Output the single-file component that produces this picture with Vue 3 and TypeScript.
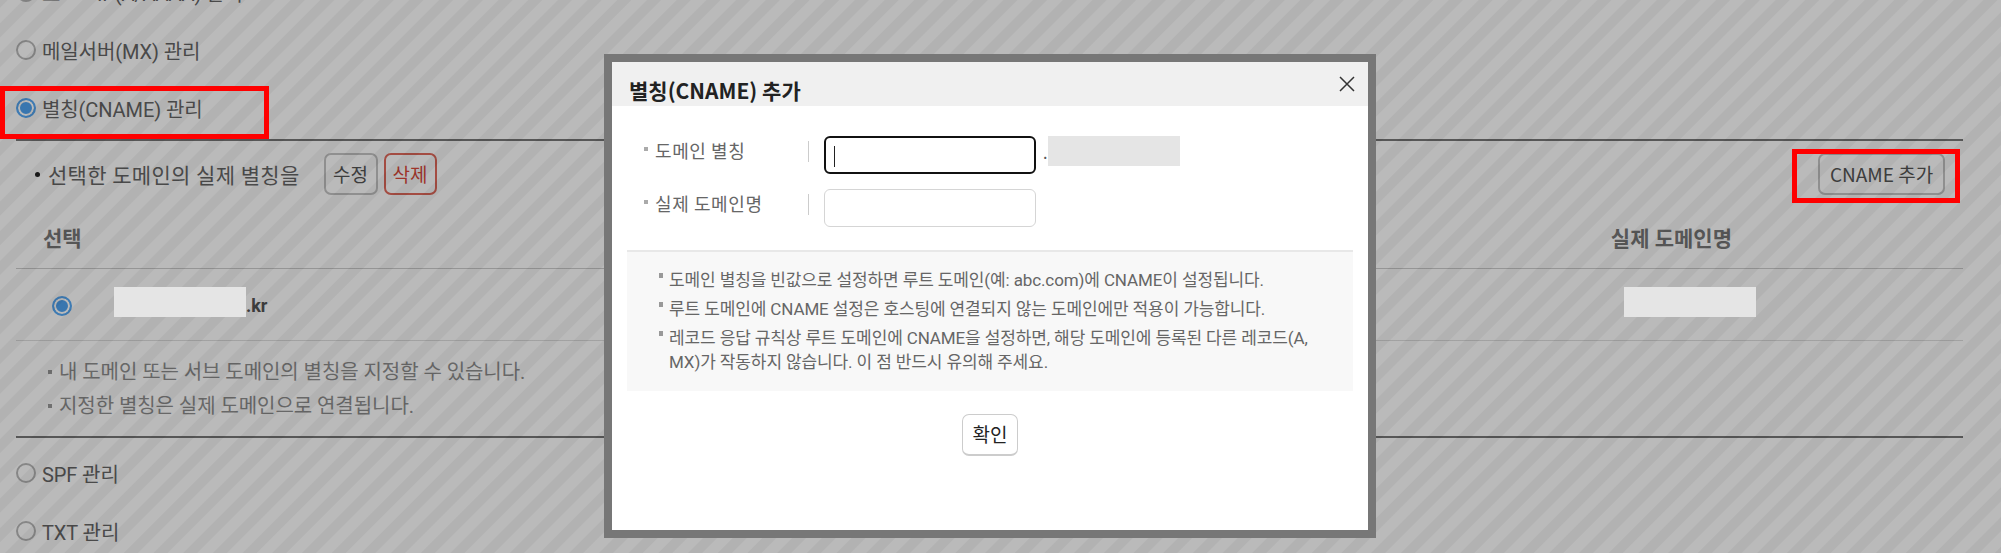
<script setup lang="ts">
const radioTop = ['호스트IP(A/AAAA) 관리', '메일서버(MX) 관리']
const radioBottom = ['SPF 관리', 'TXT 관리']
const pageNotes = [
  '내 도메인 또는 서브 도메인의 별칭을 지정할 수 있습니다.',
  '지정한 별칭은 실제 도메인으로 연결됩니다.',
]
const modalNotes = [
  '도메인 별칭을 빈값으로 설정하면 루트 도메인(예: abc.com)에 CNAME이 설정됩니다.',
  '루트 도메인에 CNAME 설정은 호스팅에 연결되지 않는 도메인에만 적용이 가능합니다.',
  '레코드 응답 규칙상 루트 도메인에 CNAME을 설정하면, 해당 도메인에 등록된 다른 레코드(A, MX)가 작동하지 않습니다. 이 점 반드시 유의해 주세요.',
]
</script>

<template>
  <div class="screen">
    <div class="page">
      <label v-for="r in radioTop" :key="r" class="radio-row">
        <span class="radio"></span>{{ r }}
      </label>
      <label class="radio-row">
        <span class="radio on"></span>별칭(CNAME) 관리
      </label>

      <section class="panel">
        <div class="toolbar">
          <span class="dot"></span>
          <span class="toolbar-text">선택한 도메인의 실제 별칭을</span>
          <button class="btn edit">수정</button>
          <button class="btn del">삭제</button>
          <button class="btn add">CNAME 추가</button>
        </div>
        <div class="thead">
          <span class="th-select">선택</span>
          <span class="th-real">실제 도메인명</span>
        </div>
        <div class="tbody">
          <span class="radio on row-radio"></span>
          <span class="mask row-mask"></span><b class="tld">.kr</b>
          <span class="mask row-mask real-mask"></span>
        </div>
        <ul class="notes">
          <li v-for="n in pageNotes" :key="n">{{ n }}</li>
        </ul>
      </section>

      <label v-for="r in radioBottom" :key="r" class="radio-row">
        <span class="radio"></span>{{ r }}
      </label>
    </div>

    <div class="overlay"></div>
    <div class="red-box box-a"></div>
    <div class="red-box box-b"></div>

    <div class="modal">
      <header class="modal-head">
        <h2>별칭(CNAME) 추가</h2>
        <svg class="close" width="16" height="16" viewBox="0 0 16 16">
          <path d="M1 1L15 15M15 1L1 15" stroke="#333" stroke-width="1.5" fill="none" />
        </svg>
      </header>
      <div class="form">
        <div class="form-row">
          <span class="form-label">도메인 별칭</span>
          <span class="input focus"><i class="caret"></i></span>
          <span class="suffix">.</span>
          <span class="mask"></span>
        </div>
        <div class="form-row second">
          <span class="form-label">실제 도메인명</span>
          <span class="input"></span>
        </div>
      </div>
      <ul class="info">
        <li v-for="n in modalNotes" :key="n">{{ n }}</li>
      </ul>
      <div class="actions">
        <button class="btn ok">확인</button>
      </div>
    </div>
  </div>
</template>

<style>
html, body {
  margin: 0;
  background: #fff;
  overflow: hidden;
}
</style>

<style scoped>
.screen {
  position: relative;
  width: 2001px;
  height: 553px;
  overflow: hidden;
  font-family: "Noto Sans CJK KR", "Noto Sans", sans-serif;
  color: #444;
}

.page {
  padding: 0 38px 0 16px;
  margin-top: -37px;
  font-family: Roboto, "Noto Sans CJK KR", sans-serif;
}

.radio-row {
  display: flex;
  align-items: center;
  height: 58px;
  font-size: 20px;
  letter-spacing: -0.1px;
  color: #666;
}

.radio {
  flex: none;
  box-sizing: border-box;
  width: 20px;
  height: 20px;
  margin-right: 6px;
  border: 2px solid #b8b8b8;
  border-radius: 50%;
  background: #fff;
}

.radio.on {
  border: 2px solid #55a8f5;
  box-shadow: inset 0 0 0 2px #fff;
  background: #4ea2f0;
}

.panel {
  border-top: 2px solid #777;
  border-bottom: 2px solid #777;
  margin-top: 2px;
  margin-bottom: 6px;
}

.toolbar {
  display: flex;
  align-items: center;
  height: 69px;
  padding: 0 18px 3px 19px;
  box-sizing: border-box;
  font-size: 21px;
  color: #666;
}

.dot {
  width: 5px;
  height: 5px;
  background: #222;
  border-radius: 50%;
  margin-right: 8px;
}

.toolbar-text {
  letter-spacing: 0.27px;
  margin-right: 24px;
}

.btn {
  box-sizing: border-box;
  height: 42px;
  padding: 0 0 2px;
  font: inherit;
  font-size: 19px;
  background: #fff;
  color: #555;
  border: 2px solid #c4c4c4;
  border-radius: 7px;
}

.edit {
  width: 54px;
  margin-right: 6px;
}

.del {
  width: 53px;
  color: #d9483a;
  border-color: #e0685a;
}

.add {
  width: 127px;
  margin-left: auto;
  font-family: "Noto Sans CJK KR", sans-serif;
  font-size: 19px;
}

.thead {
  box-sizing: border-box;
  display: flex;
  justify-content: space-between;
  align-items: center;
  height: 59px;
  padding: 0 231px 4px 27px;
  font-size: 21px;
  font-weight: 700;
  color: #777;
  border-bottom: 1px solid #ccc;
}

.tbody {
  display: flex;
  align-items: center;
  height: 71px;
  padding-left: 36px;
  border-bottom: 1px solid #ddd;
  font-size: 18px;
}

.row-radio {
  margin: 2px 42px 0 0;
}

.row-mask {
  margin-bottom: 5px;
}

.mask {
  position: relative;
  z-index: 3;
  flex: none;
  display: block;
  width: 132px;
  height: 30px;
  background: #e5e5e5;
}

.tld {
  color: #555;
  margin-top: 2px;
}

.real-mask {
  margin-left: auto;
  margin-right: 207px;
}

.notes {
  list-style: none;
  margin: 0;
  padding: 14px 0 13px 32px;
  font-size: 20px;
  line-height: 34px;
  letter-spacing: -0.06px;
  color: #8e8e8e;
}

.notes li {
  position: relative;
  padding-left: 11px;
}

.notes li::before {
  content: "";
  position: absolute;
  left: 0;
  top: 15px;
  width: 4px;
  height: 4px;
  background: #999;
}

.overlay {
  position: absolute;
  inset: 0;
  z-index: 2;
  background: repeating-linear-gradient(135deg, rgba(0, 0, 0, 0.3) 0 5px, rgba(0, 0, 0, 0.27) 6px 16px, rgba(0, 0, 0, 0.3) 17px 21px);
}

.red-box {
  position: absolute;
  z-index: 4;
  box-sizing: border-box;
  border: 5px solid #f00;
}

.box-a {
  left: 0;
  top: 86px;
  width: 269px;
  height: 53px;
}

.box-b {
  left: 1792px;
  top: 149px;
  width: 168px;
  height: 54px;
}

.modal {
  position: absolute;
  z-index: 5;
  left: 604px;
  top: 54px;
  box-sizing: border-box;
  width: 772px;
  height: 484px;
  border: 8px solid #777;
  background: #fff;
}

.modal-head {
  display: flex;
  justify-content: space-between;
  height: 44px;
  padding: 0 13px 0 17px;
  background: #f0f0f0;
}

.modal-head h2 {
  margin: 10px 0 0;
  font-size: 21px;
  line-height: 36px;
  font-weight: 700;
  color: #222;
}

.close {
  margin-top: 14px;
}

.form {
  padding: 30px 0 23px 32px;
}

.form-row {
  display: flex;
  align-items: flex-start;
  height: 38px;
}

.form-row.second {
  margin-top: 15px;
}

.form-label {
  position: relative;
  box-sizing: border-box;
  width: 180px;
  padding-left: 11px;
  font-size: 18px;
  line-height: 28px;
  letter-spacing: 0.6px;
  color: #666;
}

.form-label::before {
  content: "";
  position: absolute;
  left: 0;
  top: 11px;
  width: 4px;
  height: 4px;
  background: #aaa;
}

.form-label::after {
  content: "";
  position: absolute;
  left: 164px;
  top: 5px;
  width: 1px;
  height: 21px;
  background: #ccc;
}

.input {
  box-sizing: border-box;
  display: block;
  width: 212px;
  height: 38px;
  border: 1px solid #d5d5d5;
  border-radius: 6px;
}

.input.focus {
  position: relative;
  border: 2px solid #111;
}

.caret {
  position: absolute;
  left: 8px;
  top: 8px;
  width: 1px;
  height: 21px;
  background: #222;
}

.suffix {
  width: 12px;
  padding-left: 7px;
  box-sizing: border-box;
  font-size: 16px;
  line-height: 32px;
  color: #555;
}

.info {
  list-style: none;
  margin: 0 15px;
  padding: 16px 22px 17px 42px;
  background: #f8f8f8;
  border-top: 2px solid #e8e8e8;
  font-family: Roboto, "Noto Sans CJK KR", sans-serif;
  font-size: 17px;
  line-height: 24px;
  letter-spacing: -0.12px;
  color: #666;
}

.info li {
  position: relative;
  margin-bottom: 5px;
}

.info li:last-child {
  margin-bottom: 0;
}

.info li::before {
  content: "";
  position: absolute;
  left: -10px;
  top: 5px;
  width: 4px;
  height: 5px;
  background: #999;
}

.actions {
  display: flex;
  justify-content: center;
  padding-top: 23px;
}

.ok {
  width: 56px;
  height: 42px;
  font-size: 19px;
  color: #222;
  border-width: 1px 1px 2px;
  border-color: #ccc;
}
</style>
